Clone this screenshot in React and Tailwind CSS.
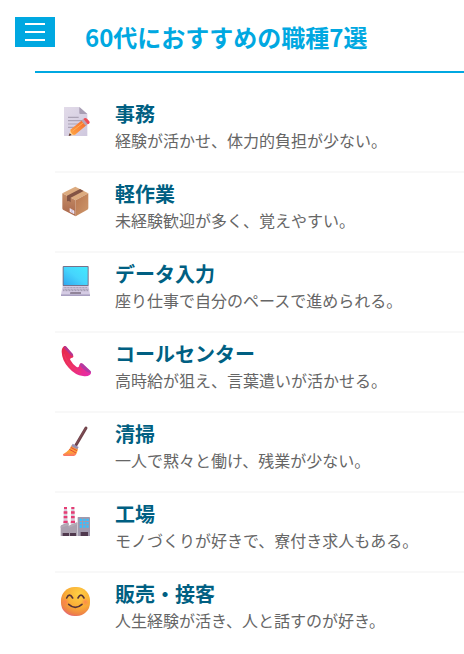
function DocumentIcon() {
  return (
    <>
      <defs>
        <linearGradient id="paper" x1="0" y1="0" x2="1" y2="1">
          <stop offset="0" stopColor="#e2dbe9" />
          <stop offset="1" stopColor="#cfc8de" />
        </linearGradient>
        <linearGradient id="pencil" x1="0" y1="1" x2="1" y2="0">
          <stop offset="0" stopColor="#ffa544" />
          <stop offset="1" stopColor="#f4652c" />
        </linearGradient>
      </defs>
      <path d="M42 36h46l24 21v66H42z" fill="url(#paper)" />
      <path d="M88 36l24 21H91q-3 0-3-3z" fill="#a89eb4" />
      <path d="M54 67h32M54 77h44M54 87h36M54 97h20" stroke="#aba3b6" strokeWidth="3.5" />
      <path d="M56 123l7-21 15 17z" fill="#ffd9a0" />
      <path d="M56 123l3-8 6 5z" fill="#4c2b35" />
      <path d="M61 104l37-30 13 15-36 30q-5 2-9-3-5-5-5-12z" fill="url(#pencil)" />
      <path d="M67 109l37-29" stroke="#ffae55" strokeWidth="3" />
      <path d="M94 77l6-5 13 15-6 5z" fill="#b9a5b6" />
      <path d="M100 72l3-2q4-3 8 1l7 8q3 4-1 7l-4 2z" fill="#ee4c55" />
    </>
  );
}

function BoxIcon() {
  return (
    <>
      <defs>
        <linearGradient id="boxLeft" x1="0" y1="0" x2="0" y2="1">
          <stop offset="0" stopColor="#c58d67" />
          <stop offset="1" stopColor="#a9664a" />
        </linearGradient>
        <linearGradient id="boxRight" x1="0" y1="0" x2="1" y2="1">
          <stop offset="0" stopColor="#b8764f" />
          <stop offset="1" stopColor="#cf986c" />
        </linearGradient>
      </defs>
      <path d="M76 35l39 20-38 21-40-21z" fill="#dcab7f" />
      <path d="M37 55l40 21v48l-38-20q-2-1-2-4z" fill="url(#boxLeft)" />
      <path d="M77 76l38-21v44q0 3-3 5l-35 20z" fill="url(#boxRight)" />
      <path d="M51 62l39-20 11 6-39 20v14l-5-4-6 1z" fill="#825344" />
      <path d="M59 99l14 8v11l-14-8z" fill="#eee5f4" />
      <path d="M63 104l6 4M63 109l6 4" stroke="#b5a8ca" strokeWidth="2" />
    </>
  );
}

function LaptopIcon() {
  return (
    <>
      <defs>
        <linearGradient id="screen" x1="0" y1="1" x2="1" y2="0">
          <stop offset="0" stopColor="#30a8f0" />
          <stop offset=".5" stopColor="#46d5fd" />
          <stop offset="1" stopColor="#43e9fe" />
        </linearGradient>
      </defs>
      <rect x="38" y="33" width="78" height="61" rx="3" fill="#77718a" />
      <rect x="41" y="36" width="72" height="54" rx="1" fill="url(#screen)" />
      <path d="M38 93h78l4 26H33z" fill="#d5cbe4" />
      <path d="M33 118h87v5H33z" fill="#aaa0c2" />
      <path d="M41 98h72M40 103h75M39 107h77" stroke="#938a9f" strokeWidth="2.5" strokeDasharray="3 1.5" />
      <path d="M61 111h32v6H60z" fill="#918499" />
    </>
  );
}

function PhoneIcon() {
  return (
    <>
      <defs>
        <linearGradient id="handset" x1="0" y1="0" x2="1" y2="1">
          <stop offset="0" stopColor="#e52847" />
          <stop offset=".5" stopColor="#ed3067" />
          <stop offset="1" stopColor="#e52ab0" />
        </linearGradient>
      </defs>
      <path
        d="M43 33q-8 5-8 17 1 27 21 48 19 22 43 25 13 2 20-3 6-5 3-9L98 86q-4-3-8 0-3 3-3 8-2 5-8 1-11-7-18-20-2-5 3-6 7-1 6-6L49 35q-3-3-6-2z"
        fill="url(#handset)"
      />
      <path d="M43 33q3-1 6 2l19 21q4 5 0 7-4 1-8-5L45 42q-5-5-2-9z" fill="#b43591" />
      <path d="M92 85q3-1 7 2l22 20q4 5 0 6-6 1-13-4L93 95q-5-6-1-10z" fill="#b339a3" />
      <path d="M42 57q7 23 25 40 12 11 26 16" fill="none" stroke="#f34266" strokeWidth="4" opacity=".5" />
    </>
  );
}

function BroomIcon() {
  return (
    <>
      <defs>
        <linearGradient id="bristles" x1="0" y1="0" x2="0" y2="1">
          <stop offset="0" stopColor="#f5a23f" />
          <stop offset=".65" stopColor="#ffa038" />
          <stop offset="1" stopColor="#fa716f" />
        </linearGradient>
      </defs>
      <path d="M78 90l30-51" stroke="#70434b" strokeWidth="9" strokeLinecap="round" />
      <path d="M79 86l28-47" stroke="#8a5559" strokeWidth="2" />
      <path d="M65 91q-7 17-26 27-2 4 3 5h30q9-4 12-22z" fill="url(#bristles)" />
      <path d="M68 86l18 10-4 7-18-9z" fill="#9a90b0" />
      <path d="M62 97l19 10M58 103l20 11" stroke="#e34a39" strokeWidth="3" />
      <path d="M55 112l-8 10M64 114l-4 8" stroke="#ee8a3d" strokeWidth="1" />
    </>
  );
}

function FactoryIcon() {
  return (
    <>
      <path d="M42 36h9l2 54H40zM64 36h9l2 54H62z" fill="#d8cbd9" />
      <path
        d="M42 36h9v6h-9zM41 49h11v7H41zM41 63h11v7H41zM41 77h12v7H40zM64 36h9v6h-9zM63 49h11v7H63zM63 63h11v7H63zM63 77h12v7H62z"
        fill="#e63c74"
      />
      <path d="M32 123V94q0-3 3-4l18-7q3-1 3 3v7l21-10q5-2 5 3v37z" fill="#aaa0ae" />
      <path d="M83 123V68q0-2 2-2h33q2 0 2 2v55z" fill="#a199ad" />
      <path d="M32 94l24-9v5l-24 9zM56 93l26-11v6l-26 11z" fill="#b3aab5" />
      <path d="M38 114h19v9H38zM60 114h18v9H60zM92 111h22v12H92z" fill="#50394e" />
      <path
        d="M89 71h7v7h-7zM99 71h7v7h-7zM109 71h7v7h-7zM89 81h7v7h-7zM99 81h7v7h-7zM109 81h7v7h-7zM89 91h7v7h-7zM99 91h7v7h-7zM109 91h7v7h-7z"
        fill="#35c0ff"
      />
    </>
  );
}

function SmileIcon() {
  return (
    <>
      <defs>
        <radialGradient id="face" cx=".62" cy=".25" r=".85">
          <stop offset="0" stopColor="#ffd044" />
          <stop offset=".55" stopColor="#f9ab36" />
          <stop offset=".82" stopColor="#ee8347" />
          <stop offset="1" stopColor="#df588d" />
        </radialGradient>
        <radialGradient id="cheek">
          <stop offset="0" stopColor="#ff7257" stopOpacity=".65" />
          <stop offset="1" stopColor="#ff7257" stopOpacity="0" />
        </radialGradient>
      </defs>
      <rect x="33" y="36" width="87" height="87" rx="40" fill="url(#face)" />
      <circle cx="46" cy="81" r="12" fill="url(#cheek)" />
      <circle cx="106" cy="81" r="12" fill="url(#cheek)" />
      <path d="M50 69q8-17 18 0M84 69q9-17 18 0" fill="none" stroke="#583338" strokeWidth="5" strokeLinecap="round" />
      <path d="M56 88q20 18 40 0" fill="none" stroke="#583338" strokeWidth="5" strokeLinecap="round" />
    </>
  );
}

const jobs = [
  { title: "事務", text: "経験が活かせ、体力的負担が少ない。", Icon: DocumentIcon },
  { title: "軽作業", text: "未経験歓迎が多く、覚えやすい。", Icon: BoxIcon },
  { title: "データ入力", text: "座り仕事で自分のペースで進められる。", Icon: LaptopIcon },
  { title: "コールセンター", text: "高時給が狙え、言葉遣いが活かせる。", Icon: PhoneIcon },
  { title: "清掃", text: "一人で黙々と働け、残業が少ない。", Icon: BroomIcon },
  { title: "工場", text: "モノづくりが好きで、寮付き求人もある。", Icon: FactoryIcon },
  { title: "販売・接客", text: "人生経験が活き、人と話すのが好き。", Icon: SmileIcon },
];

export default function App() {
  return (
    <main
      lang="ja"
      className="overflow-hidden bg-white font-['Noto_Sans_CJK_JP',sans-serif]"
    >
      <header className="relative ml-[35px] border-b-2 border-[#00a8e1] pt-[19px] pb-[17px] pl-[50px]">
        <button
          type="button"
          aria-label="メニュー"
          className="absolute top-[17px] left-[-20px] flex h-[30px] w-10 flex-col items-center justify-center gap-1.5 bg-[#00a8e1]"
        >
          <span className="h-0.5 w-5 bg-white" />
          <span className="h-0.5 w-5 bg-white" />
          <span className="h-0.5 w-5 bg-white" />
        </button>
        <h1 className="text-2xl leading-[35px] font-bold whitespace-nowrap text-[#00a8e1]">
          60代におすすめの職種7選
        </h1>
      </header>
      <ul className="mt-5 ml-[55px]">
        {jobs.map(({ title, text, Icon }) => (
          <li
            key={title}
            className="flex h-20 gap-6 border-b-2 border-[#f8f8f8] pl-1 last:border-b-0"
          >
            <svg
              viewBox="27 30 96 96"
              className="mt-3 size-8 shrink-0"
              aria-hidden="true"
            >
              <Icon />
            </svg>
            <div className="pt-[7px] whitespace-nowrap">
              <h2 className="text-xl leading-7 font-bold text-[#005f82]">{title}</h2>
              <p className="text-base leading-6 text-[#666666]">{text}</p>
            </div>
          </li>
        ))}
      </ul>
    </main>
  );
}
